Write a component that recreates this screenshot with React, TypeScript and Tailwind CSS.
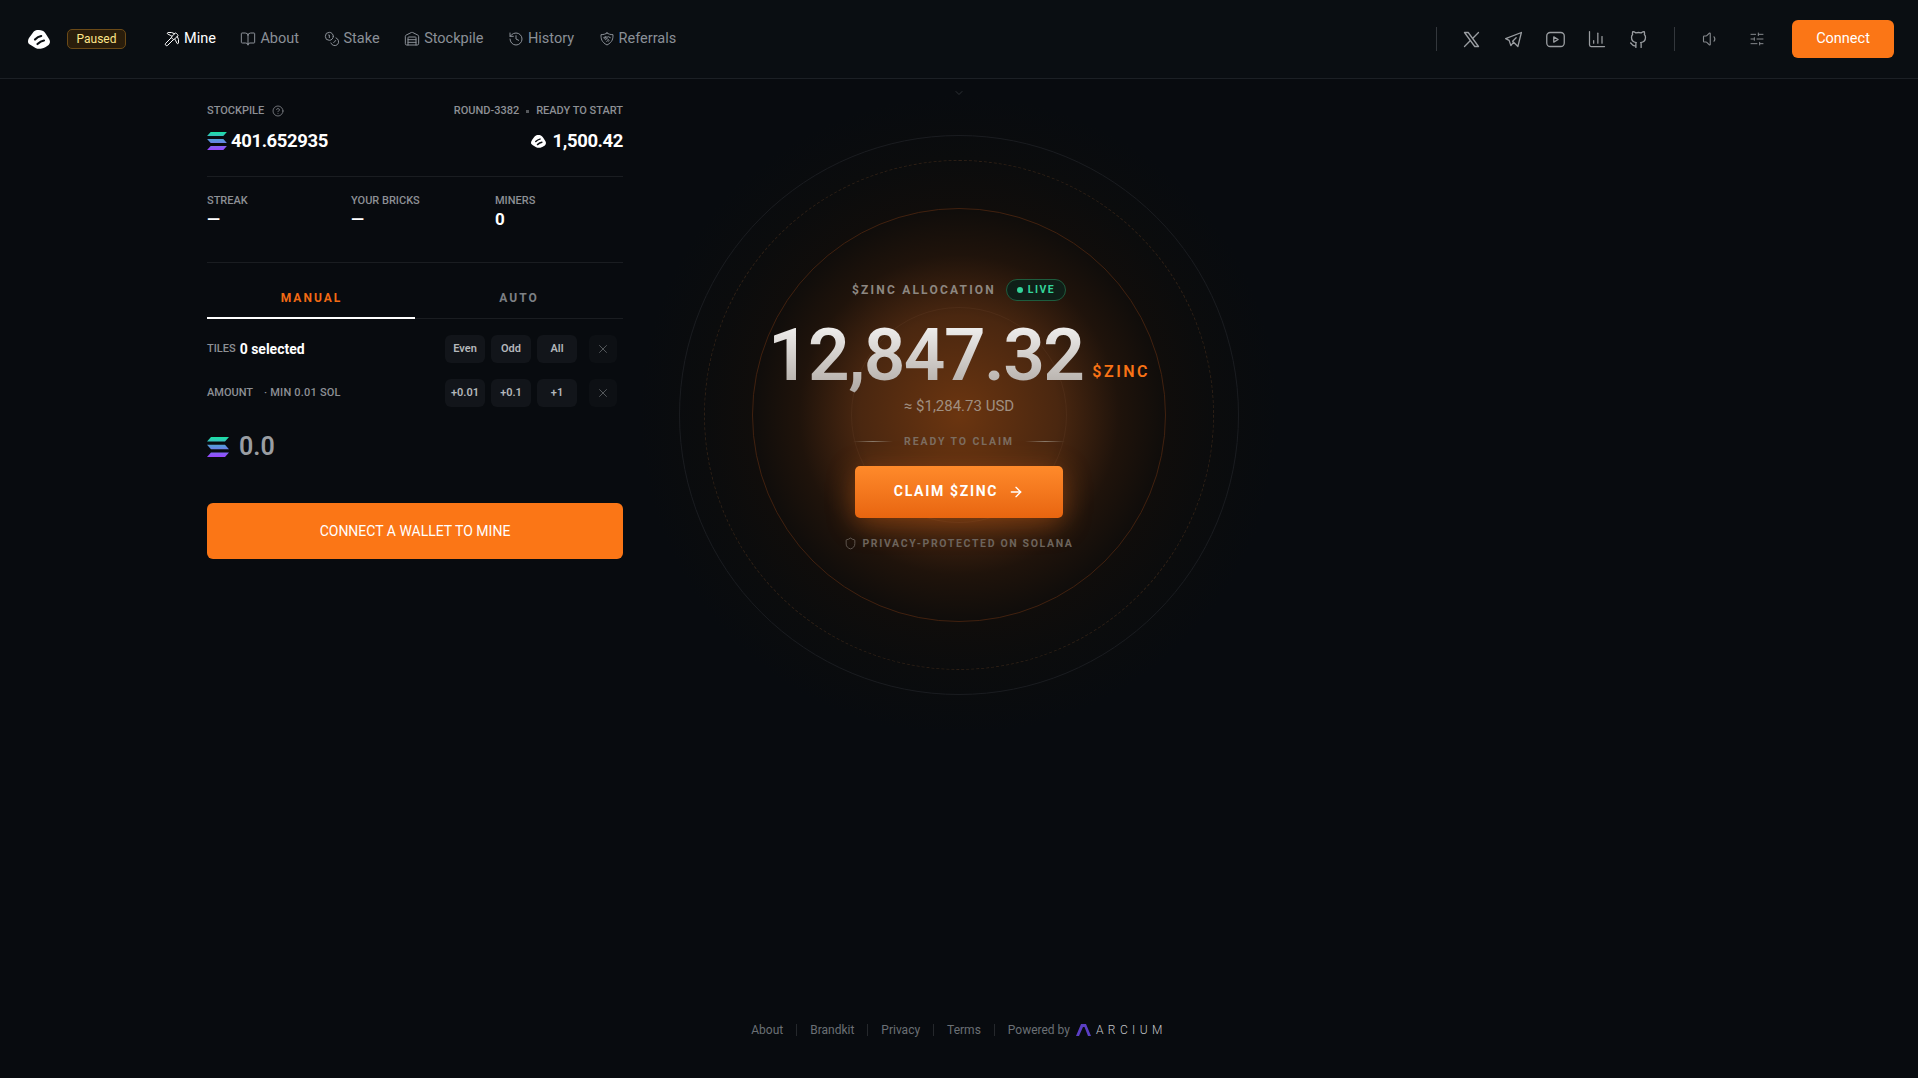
import {
  ArrowRight,
  BookOpen,
  ChartColumn,
  ChevronDown,
  CircleHelp,
  Coins,
  History,
  Pickaxe,
  Shield,
  SlidersHorizontal,
  Volume1,
  Warehouse,
  X,
} from "lucide-react";
import { TbBrandGithub, TbBrandTelegram, TbBrandX, TbBrandYoutube } from "react-icons/tb";

function Logo({ className }: { className?: string }) {
  return (
    <svg viewBox="0 0 22 19" className={className}>
      <path
        fill="currentColor"
        d="M8 .3c2-.5 4.500-.4 6.500.4 1.500.6 2.500 1.800 3.400 3.200l3.300 5.300c1.200 2 1 4.600-.9 6-1.900 1.400-4 2.600-6.500 3.300-2 .6-4.500.4-6.300-.6l-4.800-3C.7 14 0 13 0 11.500c0-1.500.5-3 1.500-4.300L4.700 3C5.600 1.700 6.500.7 8 .3z"
      />
      <path
        fill="none"
        stroke="#0a0e12"
        strokeWidth="2.200"
        strokeLinecap="round"
        d="M7 9.500c1.800-1.800 3.600-3 6.200-3.500M9.500 14c2-1.800 3.800-3 6.500-3.500"
      />
    </svg>
  );
}

function SolIcon({ className, id }: { className?: string; id: string }) {
  return (
    <svg viewBox="0 0 22 20" className={className}>
      <defs>
        <linearGradient id={id} x1="0" y1="0" x2="0" y2="1">
          <stop offset="0" stopColor="#19e3a2" />
          <stop offset="0.5" stopColor="#5f8fe0" />
          <stop offset="1" stopColor="#9945ff" />
        </linearGradient>
      </defs>
      <path
        fill={`url(#${id})`}
        d="M4 0h18l-4 4.500H0zM0 7.700h18l4 4.500H4zM4 15.500h18l-4 4.500H0z"
      />
    </svg>
  );
}

function HandshakeShield({ className, strokeWidth }: { className?: string; strokeWidth?: number }) {
  return (
    <svg
      viewBox="0 0 24 24"
      fill="none"
      stroke="currentColor"
      strokeWidth={strokeWidth}
      strokeLinecap="round"
      strokeLinejoin="round"
      className={className}
    >
      <path d="M12 3c2 1.500 5 2.500 9 2.500 0 6-.5 11-9 15.500C3.500 16.500 3 11.500 3 5.500 7 5.500 10 4.500 12 3z" />
      <path d="M7 10l3-1.500 2 1 2-1 3 1.500M10 9l-1.500 3 1.500 1 2-2 3 3-1 1.500-1.500-1-1 1" />
    </svg>
  );
}

const navItems = [
  { label: "Mine", Icon: Pickaxe, active: true },
  { label: "About", Icon: BookOpen },
  { label: "Stake", Icon: Coins },
  { label: "Stockpile", Icon: Warehouse },
  { label: "History", Icon: History },
  { label: "Referrals", Icon: HandshakeShield },
];

function Header() {
  return (
    <header className="flex h-[79px] shrink-0 items-center border-b border-[#1c2025] bg-[#0a0e12] pl-[28px] pr-[24px]">
      <Logo className="h-[19px] w-[22px] text-white" />
      <span className="ml-[17px] flex h-[20px] w-[59px] items-center justify-center rounded-[5px] border border-[#6b4a17] bg-[#2a1d0b] text-[12px] text-[#fde68a]">
        Paused
      </span>
      <nav className="ml-[38px] flex items-center gap-[24.500px]">
        {navItems.map(({ label, Icon, active }) => (
          <a
            key={label}
            className={`flex items-center gap-[4px] text-[14.500px] ${active ? "text-white" : "text-[#8b9097]"}`}
          >
            <Icon className="h-[16px] w-[16px]" strokeWidth={1.500} />
            {label}
          </a>
        ))}
      </nav>
      <div className="ml-auto flex items-center">
        <span className="h-[24px] w-px bg-[#33373c]" />
        <div className="ml-[24px] flex items-center gap-[21px] text-[#9a9da1]">
          <TbBrandX className="h-[21px] w-[21px]" strokeWidth={1.500} />
          <TbBrandTelegram className="h-[21px] w-[21px]" strokeWidth={1.500} />
          <TbBrandYoutube className="h-[21px] w-[21px]" strokeWidth={1.500} />
          <ChartColumn className="h-[20px] w-[20px]" strokeWidth={1.500} />
          <TbBrandGithub className="h-[21px] w-[21px]" strokeWidth={1.500} />
        </div>
        <span className="ml-[25px] h-[24px] w-px bg-[#33373c]" />
        <Volume1 className="ml-[27px] h-[18px] w-[18px] text-[#85888c]" strokeWidth={1.500} />
        <SlidersHorizontal className="ml-[29px] h-[16px] w-[16px] text-[#85888c]" strokeWidth={1.500} />
        <button className="ml-[27px] h-[38px] w-[102px] rounded-[6px] bg-[#fb7616] text-[14.500px] text-white">
          Connect
        </button>
      </div>
    </header>
  );
}

function SmallButton({ label }: { label: string }) {
  return (
    <button className="flex h-[28px] w-[40px] items-center justify-center rounded-[6px] bg-[#12151a] text-[11px] font-semibold text-[#b4b7ba]">
      {label}
    </button>
  );
}

function ClearButton() {
  return (
    <button className="ml-[6px] flex h-[28px] w-[28px] items-center justify-center rounded-[6px] bg-[#0d1014] text-[#5e6165]">
      <X className="h-[14px] w-[14px]" strokeWidth={1.500} />
    </button>
  );
}

function Stat({ label, value }: { label: string; value: string }) {
  return (
    <div>
      <p className="text-[11px] font-medium leading-[14px] text-[#8d9095]">{label}</p>
      <p className="mt-0 text-[17px] font-bold leading-[22px] text-white">{value}</p>
    </div>
  );
}

function MinePanel() {
  return (
    <section className="ml-[207px] w-[416px] pt-[24px]">
      <div className="flex items-center justify-between text-[11px] font-medium leading-[16px] text-[#8d9095]">
        <span className="flex items-center gap-[8px]">
          STOCKPILE
          <CircleHelp className="h-[12px] w-[12px]" strokeWidth={1.500} />
        </span>
        <span className="flex items-center gap-[7px]">
          ROUND-3382
          <span className="h-[3px] w-[3px] bg-[#55585c]" />
          READY TO START
        </span>
      </div>
      <div className="mt-[8px] flex items-center justify-between text-[18.500px] font-bold leading-[28px] tracking-[-0.400px] text-white">
        <span className="flex items-center gap-[4px]">
          <SolIcon id="sol-a" className="h-[18px] w-[20px]" />
          401.652935
        </span>
        <span className="flex items-center gap-[7px]">
          <Logo className="h-[13px] w-[15px] text-white" />
          1,500.42
        </span>
      </div>
      <div className="mt-[21px] grid h-[87px] grid-cols-[144px_144px_1fr] border-y border-[#1a1d21] pt-[17px]">
        <Stat label="STREAK" value="—" />
        <Stat label="YOUR BRICKS" value="—" />
        <Stat label="MINERS" value="0" />
      </div>
      <div className="grid h-[56px] grid-cols-2 border-b border-[#1a1d21] text-[12px] font-bold tracking-[2px]">
        <span className="-mb-px flex items-center justify-center border-b-2 border-white pl-[1px] pt-[15px] text-[#f26a14]">
          MANUAL
        </span>
        <span className="flex items-center justify-center pt-[14px] text-[#7d8085]">AUTO</span>
      </div>
      <div className="mt-[16px] flex h-[28px] items-center">
        <span className="text-[11px] font-medium text-[#8d9095]">TILES</span>
        <span className="ml-[4px] text-[14px] font-bold text-white">0 selected</span>
        <div className="ml-auto mr-[6px] flex items-center gap-[6px]">
          <SmallButton label="Even" />
          <SmallButton label="Odd" />
          <SmallButton label="All" />
          <ClearButton />
        </div>
      </div>
      <div className="mt-[16px] flex h-[28px] items-center">
        <span className="text-[11px] font-medium text-[#8d9095]">AMOUNT</span>
        <span className="ml-[11px] text-[11px] font-medium tracking-[0.200px] text-[#8d9095]">· MIN 0.01 SOL</span>
        <div className="ml-auto mr-[6px] flex items-center gap-[6px]">
          <SmallButton label="+0.01" />
          <SmallButton label="+0.1" />
          <SmallButton label="+1" />
          <ClearButton />
        </div>
      </div>
      <div className="mt-[26px] flex h-[28px] items-center gap-[10px]">
        <SolIcon id="sol-b" className="h-[20px] w-[22px]" />
        <span className="text-[25px] font-semibold text-[#9a9ea3]">0.0</span>
      </div>
      <button className="mt-[42px] h-[56px] w-full rounded-[6px] bg-[#fb7616] text-[14px] text-white">
        CONNECT A WALLET TO MINE
      </button>
    </section>
  );
}

function Hero() {
  return (
    <section className="relative mt-[56px] flex h-[560px] w-[560px] flex-col items-center pt-[144px]">
      <div className="absolute -inset-[40px] rounded-full bg-[radial-gradient(circle_closest-side,#6b3510_0%,#4a2710_31%,#1f130b_50%,#100d0b_64%,#0b0c0d_80%,transparent_100%)]" />
      <div className="absolute inset-0 rounded-full border border-[#1a1c20]" />
      <div className="absolute inset-[25px] rounded-full border border-dashed border-[#2e2016]" />
      <div className="absolute inset-[73px] rounded-full border border-[#41210f]" />
      <div className="absolute inset-[172px] rounded-full border border-[#ffc8960d]" />

      <div className="relative flex h-[22px] items-center gap-[10px]">
        <span className="text-[12px] font-bold tracking-[2.200px] text-[#8d8781]">$ZINC ALLOCATION</span>
        <span className="flex h-[22px] w-[60px] items-center justify-center gap-[5px] rounded-full border border-[#1e5c3e] bg-[#0f1f18] text-[10.500px] font-bold tracking-[1.500px] text-[#34d399]">
          <span className="h-[6px] w-[6px] rounded-full bg-[#34d399]" />
          LIVE
        </span>
      </div>
      <div className="relative mt-[10px] flex items-baseline gap-[9px]">
        <span className="bg-gradient-to-b from-white to-[#a9a29c] bg-clip-text text-[73px] font-semibold leading-[88px] tracking-[-1.600px] text-transparent">
          12,847.32
        </span>
        <span className="-translate-y-[3px] text-[16px] font-semibold tracking-[2.500px] text-[#f97316]">$ZINC</span>
      </div>
      <p className="relative -mt-[3px] text-[15px] leading-[20px] text-[#a08f80]">≈ $1,284.73 USD</p>
      <div className="relative mt-[18px] flex w-[212px] items-center justify-between">
        <span className="h-px w-[40px] bg-gradient-to-r from-transparent via-[#8a7a6a] to-transparent" />
        <span className="text-[10.500px] font-bold tracking-[1.900px] text-[#7c6d60]">READY TO CLAIM</span>
        <span className="h-px w-[40px] bg-gradient-to-r from-transparent via-[#8a7a6a] to-transparent" />
      </div>
      <button className="relative mt-[16px] flex h-[52px] w-[208px] items-center justify-center gap-[10px] rounded-[5px] bg-gradient-to-b from-[#ff8a2a] to-[#e8650f] text-[14px] font-bold tracking-[1.700px] text-white shadow-[0_6px_28px_rgba(249,115,22,0.35)]">
        CLAIM $ZINC
        <ArrowRight className="h-[16px] w-[16px]" strokeWidth={2} />
      </button>
      <div className="relative mt-[18px] flex items-center gap-[5px] text-[10.500px] font-bold tracking-[1.650px] text-[#6d645c]">
        <Shield className="h-[13px] w-[13px]" strokeWidth={1.500} />
        PRIVACY-PROTECTED ON SOLANA
      </div>
    </section>
  );
}

const footerLinks = ["About", "Brandkit", "Privacy", "Terms"];

function Footer() {
  return (
    <footer className="mt-auto flex h-[97px] items-center justify-center text-[12px] text-[#6b7075]">
      {footerLinks.map((link) => (
        <span key={link} className="flex items-center">
          {link}
          <span className="mx-[13px] h-[12px] w-px bg-[#25282c]" />
        </span>
      ))}
      <span>Powered by</span>
      <svg viewBox="0 0 15 12" className="ml-[6px] h-[12px] w-[15px]">
        <path fill="#5b3fc4" d="M5 0h5l5 12h-3L8.500 3 7 3 3 12H0z" />
      </svg>
      <span className="ml-[5px] text-[12px] font-light tracking-[4.400px] text-[#c4c6c9]">ARCIUM</span>
    </footer>
  );
}

export default function App() {
  return (
    <div className="flex h-[1078px] flex-col overflow-hidden bg-[#080b0f] font-['Roboto',sans-serif]">
      <Header />
      <main className="relative grid grid-cols-[1fr_560px_1fr]">
        <MinePanel />
        <Hero />
        <div />
        <ChevronDown className="absolute left-[953px] top-[8px] h-[12px] w-[12px] text-[#3a3d41]" strokeWidth={1.500} />
      </main>
      <Footer />
    </div>
  );
}
